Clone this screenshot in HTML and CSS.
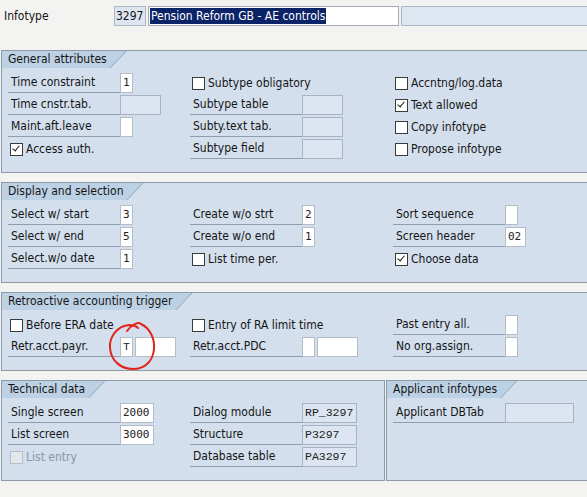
FILE: index.html
```html
<!DOCTYPE html>
<html lang="en">
<head>
  <meta charset="UTF-8" />
  <title>Infotype 3297</title>
  <link rel="stylesheet" href="styles.css">
</head>
<body>
  <div class="screen">
    <div class="head-row">
      <span class="head-label">Infotype</span>
      <span class="fld num">3297</span>
      <span class="fld name"><span class="sel">Pension Reform GB - AE controls</span></span>
      <span class="fld rest"></span>
    </div>

    <section class="group">
      <div class="tab"><span>General attributes</span></div>
      <div class="grid">
        <div class="cell"><span class="lbl">Time constraint</span><span class="inp w1">1</span></div>
        <div class="cell"><span class="chk"></span><span class="ctext">Subtype obligatory</span></div>
        <div class="cell"><span class="chk"></span><span class="ctext">Accntng/log.data</span></div>

        <div class="cell"><span class="lbl">Time cnstr.tab.</span><span class="inp off w4"></span></div>
        <div class="cell"><span class="lbl">Subtype table</span><span class="inp off w4"></span></div>
        <div class="cell"><span class="chk on"></span><span class="ctext">Text allowed</span></div>

        <div class="cell"><span class="lbl">Maint.aft.leave</span><span class="inp w1"></span></div>
        <div class="cell"><span class="lbl">Subty.text tab.</span><span class="inp off w4"></span></div>
        <div class="cell"><span class="chk"></span><span class="ctext">Copy infotype</span></div>

        <div class="cell"><span class="chk on"></span><span class="ctext">Access auth.</span></div>
        <div class="cell"><span class="lbl">Subtype field</span><span class="inp off w4"></span></div>
        <div class="cell"><span class="chk"></span><span class="ctext">Propose infotype</span></div>
      </div>
    </section>

    <section class="group">
      <div class="tab"><span>Display and selection</span></div>
      <div class="grid">
        <div class="cell"><span class="lbl">Select w/ start</span><span class="inp w1">3</span></div>
        <div class="cell"><span class="lbl">Create w/o strt</span><span class="inp w1">2</span></div>
        <div class="cell"><span class="lbl">Sort sequence</span><span class="inp w1"></span></div>

        <div class="cell"><span class="lbl">Select w/ end</span><span class="inp w1">5</span></div>
        <div class="cell"><span class="lbl">Create w/o end</span><span class="inp w1">1</span></div>
        <div class="cell"><span class="lbl">Screen header</span><span class="inp w2">02</span></div>

        <div class="cell"><span class="lbl">Select.w/o date</span><span class="inp w1">1</span></div>
        <div class="cell"><span class="chk"></span><span class="ctext">List time per.</span></div>
        <div class="cell"><span class="chk on"></span><span class="ctext">Choose data</span></div>
      </div>
    </section>

    <section class="group">
      <div class="tab"><span>Retroactive accounting trigger</span></div>
      <div class="grid">
        <div class="cell"><span class="chk"></span><span class="ctext">Before ERA date</span></div>
        <div class="cell"><span class="chk"></span><span class="ctext">Entry of RA limit time</span></div>
        <div class="cell"><span class="lbl">Past entry all.</span><span class="inp w1"></span></div>

        <div class="cell marked">
          <span class="lbl">Retr.acct.payr.</span><span class="inp w1 serif">T</span><span class="inp w4"></span>
          <svg class="ring" width="54" height="56" viewBox="0 0 54 56">
            <path d="M22 14 C 26 8, 34 4, 36 7 C 45 11, 50 22, 49 32 C 48 44, 40 52, 28 52 C 16 52, 6 44, 5 31 C 4 19, 13 9, 24 8 C 28 8, 31 9, 33 11" fill="none" stroke="#e3231c" stroke-width="2" stroke-linecap="round" />
          </svg>
        </div>
        <div class="cell"><span class="lbl">Retr.acct.PDC</span><span class="inp w1"></span><span class="inp w4"></span></div>
        <div class="cell"><span class="lbl">No org.assign.</span><span class="inp w1"></span></div>
      </div>
    </section>

    <div class="bottom">
      <section class="group tech">
        <div class="tab"><span>Technical data</span></div>
        <div class="grid two">
          <div class="cell"><span class="lbl">Single screen</span><span class="inp w3">2000</span></div>
          <div class="cell"><span class="lbl">Dialog module</span><span class="inp off w5 serif">RP_3297</span></div>

          <div class="cell"><span class="lbl">List screen</span><span class="inp w3">3000</span></div>
          <div class="cell"><span class="lbl">Structure</span><span class="inp off w5 serif">P3297</span></div>

          <div class="cell"><span class="chk dis"></span><span class="ctext dis">List entry</span></div>
          <div class="cell"><span class="lbl">Database table</span><span class="inp off w5 serif">PA3297</span></div>
        </div>
      </section>
      <section class="group appl">
        <div class="tab"><span>Applicant infotypes</span></div>
        <div class="grid one">
          <div class="cell"><span class="lbl">Applicant DBTab</span><span class="inp off w6"></span></div>
        </div>
      </section>
    </div>
  </div>
</body>
</html>
```

FILE: styles.css
```css
body {
  margin: 0;
  background: #f3f3f1;
  color: #151515;
  font-family: 'DejaVu Sans', sans-serif;
  font-stretch: condensed;
  font-size: 12px;
  overflow: hidden;
}
.screen {
  width: 600px;
  padding: 6px 0 0 1px;
}
.head-row {
  display: flex;
  align-items: center;
  height: 20px;
  margin-bottom: 24px;
}
.head-label {
  width: 110px;
  padding-left: 3px;
}
.fld {
  height: 18px;
  line-height: 18px;
  border: 1px solid #aeb8c4;
  margin-right: 2px;
}
.fld.num {
  width: 29px;
  background: #dde5f0;
  padding-left: 1px;
}
.fld.name {
  width: 248px;
  background: #fff;
  border-color: #a3aab2;
  padding-left: 1px;
}
.fld.rest {
  flex: 1;
  background: #dde6f1;
}
.sel {
  background: #0b2367;
  color: #fff;
  padding: 1px 1px;
}
.group {
  background: #d3dfed;
  border: 1px solid #8d99a6;
  padding-bottom: 12px;
  margin-bottom: 9px;
}
.tab {
  display: inline-block;
  position: relative;
  height: 17px;
  line-height: 17px;
  padding: 0 20px 0 6px;
}
.tab::before,
.tab::after {
  content: '';
  position: absolute;
  top: 0;
  bottom: 0;
  left: 0;
}
.tab::before {
  right: 0;
  background: #8fa4b9;
  clip-path: polygon(0 0, 100% 0, calc(100% - 16px) 100%, 0 100%);
}
.tab::after {
  right: 1px;
  background: #bdd1e4;
  clip-path: polygon(0 0, 100% 0, calc(100% - 16px) 100%, 0 100%);
}
.tab span {
  position: relative;
  z-index: 1;
}
.grid {
  display: grid;
  grid-template-columns: 182px 203px 1fr;
  grid-auto-rows: 22px;
  padding: 4px 0 0 6px;
}
.grid.two {
  grid-template-columns: 182px 1fr;
}
.grid.one {
  grid-template-columns: 1fr;
}
.cell {
  display: flex;
  align-items: center;
  position: relative;
}
.lbl {
  width: 109px;
  height: 20px;
  line-height: 20px;
  padding-left: 3px;
  border-bottom: 1px solid #909dac;
  align-self: flex-start;
}
.inp {
  height: 20px;
  line-height: 18px;
  background: #fff;
  border: 1px solid #b4bcc5;
  margin: 1px 2px 0 0;
  padding-left: 2px;
  font-family: 'DejaVu Sans Mono', monospace;
  font-stretch: normal;
  font-size: 11px;
  color: #222;
  box-sizing: border-box;
  align-self: flex-start;
}
.inp.off {
  background: #dce5f1;
  border-color: #a7b3c1;
}
.inp.serif {
  font-family: 'Liberation Mono', monospace;
  font-size: 11.5px;
}
.w1 { width: 13px; }
.w2 { width: 21px; }
.w3 { width: 34px; }
.w4 { width: 41px; }
.w5 { width: 55px; }
.w6 { width: 69px; }
.chk {
  width: 13px;
  height: 13px;
  box-sizing: border-box;
  border: 1px solid #3a3a3a;
  background: #fff;
  margin: 0 3px 0 2px;
  position: relative;
}
.chk.on::after {
  content: '';
  position: absolute;
  left: 3px;
  top: 0;
  width: 3px;
  height: 6px;
  border: solid #1a1a1a;
  border-width: 0 1.5px 1.5px 0;
  transform: rotate(40deg);
}
.chk.dis {
  border-color: #b9bec4;
  background: #e3e6ea;
}
.ctext.dis {
  color: #8a96a4;
}
.ring {
  position: absolute;
  left: 97px;
  top: -19px;
  pointer-events: none;
}
.bottom {
  display: flex;
  gap: 1px;
}
.group.tech {
  width: 382px;
  flex-shrink: 0;
}
.group.appl {
  flex: 1;
}
.group.appl .grid {
  padding-left: 0;
}
.group.appl .lbl {
  margin-left: 6px;
}
```
